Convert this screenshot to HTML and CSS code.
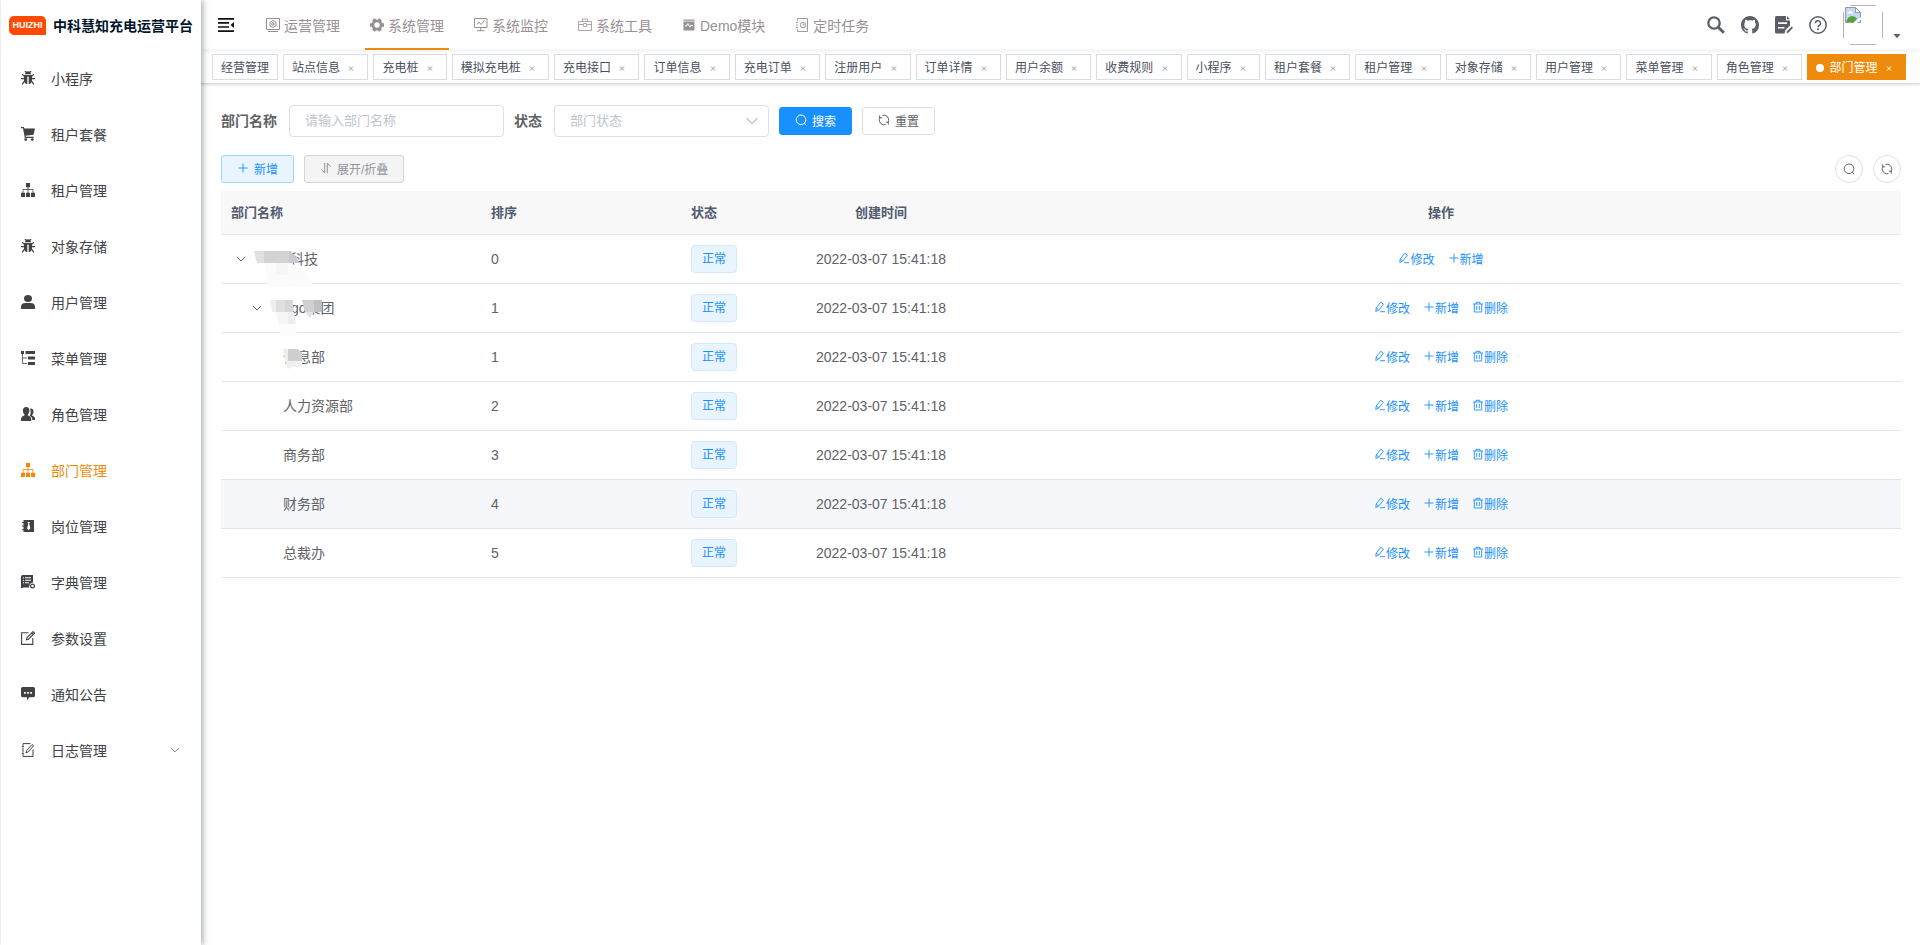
FILE: index.html
```html
<!DOCTYPE html>
<html lang="zh-CN">

<head>
    <meta charset="UTF-8">
    <meta name="viewport" content="width=device-width, initial-scale=1.0">
    <title>部门管理 - 中科慧知充电运营平台</title>
    <link rel="stylesheet" href="styles.css">
</head>

<body>
    <!-- icon sprite -->
    <svg class="sprite" aria-hidden="true">
        <symbol id="bug" viewBox="0 0 14 14">
            <path d="M4 3.300a3 3 0 0 1 6 0zM3 4h8v5.500q0 2.800-3.300 3.700V5.500H6.300v7.700Q3 12.300 3 9.500z" />
            <path d="M3.500 5.400 1.200 3.200M10.500 5.400l2.300-2.200M3.500 7.600H0M10.500 7.600H14M3.500 10 1.200 13.300M10.500 10l2.300 3.300M5 1.200 4 0M9 1.200 10 0" fill="none" stroke="currentColor" stroke-width="1.200" />
        </symbol>
        <symbol id="cart" viewBox="0 0 14 14">
            <path d="M0 0h2.800l.6 1.600H14l-1.500 6.200-8 .9.3 1H12.700v1.200H3.800L2 1.200H0z" />
            <circle cx="4.7" cy="12.6" r="1.4" />
            <circle cx="11.3" cy="12.6" r="1.4" />
        </symbol>
        <symbol id="tree" viewBox="0 0 14 14">
            <path d="M5 0h4v4.200H5zM0 9.800h4V14H0zM5 9.800h4V14H5zM10 9.800h4V14h-4z" />
            <path d="M7 4v6M2 10V6.500h10V10" fill="none" stroke="currentColor" stroke-width=".8" />
        </symbol>
        <symbol id="user" viewBox="0 0 14 14">
            <ellipse cx="7" cy="3.5" rx="4" ry="3.5" />
            <path d="M0 14v-2.200Q0 8.200 4.500 8h5q4.500.2 4.500 3.800V14z" />
        </symbol>
        <symbol id="treetable" viewBox="0 0 14 14">
            <path d="M0 0h3v3H0zM4.500 0H14v3H4.500zM7 5.500h7v3H7zM7 11h7v3H7z" />
            <path d="M1.500 3v9.500H6M1.500 7H6" fill="none" stroke="currentColor" stroke-width=".8" />
        </symbol>
        <symbol id="peoples" viewBox="0 0 14 14">
            <path d="M5.200 0c2.200 0 3.300 1.500 3.200 3.600 0 1.700-.5 3-1.500 3.800v1.100c2.200.7 3.300 1.700 3.300 3.700V14H0v-1.800c0-2 1.200-3 3.400-3.700V7.400C2.400 6.600 1.900 5.300 1.900 3.600 1.900 1.500 3 0 5.200 0z" />
            <path d="M9 1.500c2.200-.4 3.600.8 3.500 3 0 1.600-.5 2.700-1.300 3.400v.9c1.800.7 2.800 1.500 2.800 3.200v1h-2.600c-.1-2-.9-3.200-2.700-4.200 1-1.500 1.500-4.800.3-7.300z" />
        </symbol>
        <symbol id="post" viewBox="0 0 14 14">
            <path fill-rule="evenodd" d="M2.500 1H13v12H2.500v-1.800H1v-1h1.500V7.500H1v-1h1.500V4H1V3h1.500zM6.500 3l.8 1.600L6 9.500 7.700 11l1.700-1.500-1.200-4.900L9 3z" />
        </symbol>
        <symbol id="dict" viewBox="0 0 14 14">
            <path fill-rule="evenodd" d="M1.500 0H12v7.600q-4.200.4-3.800 4.900H2V13H0V1.500Q0 0 1.500 0zM2 2.300v1h1v-1zM4 2.300v1h6v-1zM2 4.800v1h1v-1zM4 4.800v1h6v-1zM2 7.300v1h1v-1zM4 7.300v1h4v-1z" />
            <circle cx="11.5" cy="11" r="1.9" fill="none" stroke="currentColor" stroke-width="1.2" />
        </symbol>
        <symbol id="edit" viewBox="0 0 14 14">
            <path d="M7.500 1.800H.6v11.600h11.200V7M5.500 8.800l.5-2.300L12 .6l1.500 1.500L7.500 8.200zM10.500 2l1.500 1.500" fill="none" stroke="currentColor" stroke-width="1.1" />
        </symbol>
        <symbol id="message" viewBox="0 0 14 14">
            <path fill-rule="evenodd" d="M1.500 0h11Q14 0 14 1.500v7q0 1.800-1.500 1.800H8.200L6 13.500v-3.200H1.500Q0 10.300 0 8.500v-7Q0 0 1.500 0zM3 5v1.800h1.800V5zM6.100 5v1.800h1.800V5zM9.200 5v1.800H11V5z" />
        </symbol>
        <symbol id="log" viewBox="0 0 14 14">
            <path d="M9.500.6H2v2.200M2 4.500v1.700M2 8v1.700M2 11.200v2.200h10V6.500M.8 3.500h2M.8 7h2M.8 10.500h2M5 9.800l.6-2.300L11 1.600l1.600 1.200L7.200 8.900z" fill="none" stroke="currentColor" />
        </symbol>
        <symbol id="operate" viewBox="0 0 14 14">
            <path d="M.5.5h13v11H.5zM2 13.500h10M7 2.500l3 1.700v3.600L7 9.500 4 7.800V4.200z" fill="none" stroke="currentColor" />
            <circle cx="7" cy="6" r="1.3" fill="none" stroke="currentColor" />
        </symbol>
        <symbol id="gear" viewBox="0 0 14 14">
            <circle cx="7" cy="7" r="4.1" fill="none" stroke="currentColor" stroke-width="2.800" />
            <path d="M11.300 7H14M0 7h2.700M9.200 3.100l1.200-2M4.800 3.100l-1.200-2M9.200 10.900l1.200 2M4.800 10.900l-1.200 2" stroke="currentColor" stroke-width="3.400" />
        </symbol>
        <symbol id="monitor" viewBox="0 0 14 14">
            <path d="M.5.5h12.500v9H.5zM6.700 9.500v3M3 12.700h7.500M3 6.500l2-2.500 2 2.500 3.500-4" fill="none" stroke="currentColor" />
        </symbol>
        <symbol id="tool" viewBox="0 0 14 14">
            <path d="M.5 3.500h13v9H.5zM4.500 3.500V1h5v2.500M.5 6.500H5M9 6.500h4.500M5.500 5.500h3v3h-3z" fill="none" stroke="currentColor" stroke-width=".8" />
        </symbol>
        <symbol id="demo" viewBox="0 0 14 14">
            <path fill-rule="evenodd" d="M1.500 1.500h11v1.300h-11zM1.500 3.400h11V12.500h-11zM3 8.500h1.600l1.400-2 1.800 3L9.500 8H11V7H9L7.900 8 6 4.900 4 7.500H3z" />
        </symbol>
        <symbol id="job" viewBox="0 0 14 14">
            <path d="M2.500 3V.5h10v13h-10V11M1 4.500h2M1 7h2M1 9.500h2M8.200 5.300V7h1.300" fill="none" stroke="currentColor" stroke-width=".9" />
            <circle cx="8" cy="7" r="2.8" fill="none" stroke="currentColor" stroke-width=".9" />
        </symbol>
        <symbol id="fold" viewBox="0 0 16 14">
            <path d="M0 0h16v1.700H0zM0 4.100h11v1.600H0zM0 8.200h11v1.600H0zM0 12.300h16V14H0zM16 4v6l-3.500-3z" />
        </symbol>
        <symbol id="big-search" viewBox="0 0 18 18">
            <circle cx="7" cy="7" r="5.7" fill="none" stroke="currentColor" stroke-width="2.3" />
            <path d="m11.300 11.300 5.500 5.500" stroke="currentColor" stroke-width="2.8" />
        </symbol>
        <symbol id="github" viewBox="0 0 16 16">
            <path d="M8 0C3.580 0 0 3.580 0 8c0 3.540 2.290 6.530 5.470 7.590.4.070.55-.17.55-.38 0-.19-.01-.82-.01-1.490-2.010.37-2.530-.49-2.690-.94-.09-.23-.48-.94-.82-1.130-.28-.15-.68-.52-.01-.53.63-.01 1.080.58 1.230.82.72 1.210 1.870.87 2.330.66.07-.52.28-.87.51-1.070-1.780-.2-3.640-.89-3.640-3.950 0-.87.31-1.590.82-2.150-.08-.2-.36-1.020.08-2.120 0 0 .67-.21 2.200.82.64-.18 1.320-.27 2-.27.68 0 1.360.09 2 .27 1.530-1.040 2.200-.82 2.200-.82.44 1.100.16 1.920.08 2.120.51.56.82 1.270.82 2.150 0 3.070-1.870 3.750-3.650 3.950.29.25.54.73.54 1.480 0 1.070-.01 1.930-.01 2.200 0 .21.15.46.55.38A8.012 8.012 0 0 0 16 8c0-4.420-3.580-8-8-8z" />
        </symbol>
        <symbol id="doc" viewBox="0 0 18 18">
            <path fill-rule="evenodd" d="M1.500 0H11v4.500h4v5l-4.500 4.500-1 3.500h-8Q0 17.500 0 16V1.500Q0 0 1.500 0zM3 6.300v1.600h9V6.300zM3 11v1.600h6.500V11zM12 0l3 3.300h-3z" />
            <path d="m11.500 17.500.5-2.200 4.800-4.800 1.200 1.300-4.500 4.700z" />
        </symbol>
        <symbol id="question" viewBox="0 0 18 18">
            <circle cx="9" cy="9" r="8.2" fill="none" stroke="currentColor" stroke-width="1.5" />
            <path d="M6.500 7.200a2.500 2.500 0 1 1 3.700 2.200Q9 10 9 11.200" fill="none" stroke="currentColor" stroke-width="1.5" />
            <circle cx="9" cy="13.3" r="1" />
        </symbol>
        <symbol id="caret" viewBox="0 0 12 12">
            <path d="M2.500 4h7L6 8.200z" />
        </symbol>
        <symbol id="close" viewBox="0 0 16 16">
            <path d="m6 6.500 4 4m0-4-4 4" fill="none" stroke="currentColor" />
        </symbol>
        <symbol id="chevron" viewBox="0 0 12 12">
            <path d="m2 4 4 4 4-4" fill="none" stroke="currentColor" />
        </symbol>
        <symbol id="search" viewBox="0 0 12 12">
            <circle cx="6" cy="5.8" r="4.8" fill="none" stroke="currentColor" />
            <path d="m9.200 9.200 2 2" fill="none" stroke="currentColor" />
        </symbol>
        <symbol id="refresh" viewBox="0 0 12 12">
            <path d="M1.500 7.500A4.700 4.700 0 0 1 1.900 3.600M4.500 1.500A4.700 4.700 0 0 1 10.500 4.500M10.500 4.500A4.700 4.700 0 0 1 10.100 8.400M7.500 10.500A4.700 4.700 0 0 1 1.500 7.500M1.700 1.300v2.500h2.500M10.300 10.700V8.200H7.800" fill="none" stroke="currentColor" />
        </symbol>
        <symbol id="plus" viewBox="0 0 12 12">
            <path d="M6 1.500v9M1.500 6h9" fill="none" stroke="currentColor" stroke-width=".9" />
        </symbol>
        <symbol id="sort" viewBox="0 0 12 12">
            <path d="M4.700 1v10L1.500 7.500M7.300 11V1l3.200 3.500" fill="none" stroke="currentColor" />
        </symbol>
        <symbol id="pen" viewBox="0 0 12 12">
            <path d="M1.800 10.500 2.200 7 6.800 1.200 9.400 3.200 4.800 9zM2.200 7l2.600 2M6 10.700h5" fill="none" stroke="currentColor" stroke-width=".9" />
        </symbol>
        <symbol id="trash" viewBox="0 0 12 12">
            <path d="M1 3h10M4 3V1.300h4V3M2.300 3v8h7.400V3M4.700 5v4M7.300 5v4" fill="none" stroke="currentColor" stroke-width=".9" />
        </symbol>
    </svg>

    <aside class="sidebar">
        <a class="logo" href="#">
            <span class="logo-mark">HUIZHI</span>
            <span class="logo-title">中科慧知充电运营平台</span>
        </a>
        <nav class="menu">
            <a href="#"><svg><use href="#bug" /></svg><span>小程序</span></a>
            <a href="#"><svg><use href="#cart" /></svg><span>租户套餐</span></a>
            <a href="#"><svg><use href="#tree" /></svg><span>租户管理</span></a>
            <a href="#"><svg><use href="#bug" /></svg><span>对象存储</span></a>
            <a href="#"><svg><use href="#user" /></svg><span>用户管理</span></a>
            <a href="#"><svg><use href="#treetable" /></svg><span>菜单管理</span></a>
            <a href="#"><svg><use href="#peoples" /></svg><span>角色管理</span></a>
            <a href="#" class="active"><svg><use href="#tree" /></svg><span>部门管理</span></a>
            <a href="#"><svg><use href="#post" /></svg><span>岗位管理</span></a>
            <a href="#"><svg><use href="#dict" /></svg><span>字典管理</span></a>
            <a href="#"><svg><use href="#edit" /></svg><span>参数设置</span></a>
            <a href="#"><svg><use href="#message" /></svg><span>通知公告</span></a>
            <a href="#"><svg><use href="#log" /></svg><span>日志管理</span><svg class="arrow"><use href="#chevron" /></svg></a>
        </nav>
    </aside>

    <div class="main-container">
        <header class="navbar">
            <button class="hamburger" type="button" aria-label="收起菜单"><svg><use href="#fold" /></svg></button>
            <nav class="topmenu">
                <a href="#"><svg><use href="#operate" /></svg>运营管理</a>
                <a href="#" class="active"><svg><use href="#gear" /></svg>系统管理</a>
                <a href="#"><svg><use href="#monitor" /></svg>系统监控</a>
                <a href="#"><svg><use href="#tool" /></svg>系统工具</a>
                <a href="#"><svg><use href="#demo" /></svg>Demo模块</a>
                <a href="#"><svg><use href="#job" /></svg>定时任务</a>
            </nav>
            <div class="right-menu">
                <button type="button" aria-label="搜索菜单"><svg><use href="#big-search" /></svg></button>
                <a href="#" aria-label="源码地址"><svg><use href="#github" /></svg></a>
                <a href="#" aria-label="文档地址"><svg><use href="#doc" /></svg></a>
                <a href="#" aria-label="帮助"><svg><use href="#question" /></svg></a>
                <button class="avatar" type="button" aria-label="个人中心">
                    <svg class="avatar-img" viewBox="0 0 40 40">
                        <path d="M7 .5h26M7 39.500h26M.5 7v26M39.500 7v26" stroke="#b4b4b4" />
                        <path d="M2.500 2.500h10l5 5v10h-15z" fill="#c3d7f7" stroke="#9a9a9a" />
                        <path d="M12.500 2.500v5h5z" fill="#fff" stroke="#9a9a9a" />
                        <path d="M4 8.500q0-1.500 1.500-1.500 1-2 2.500-.5 2 0 2 2z" fill="#fff" />
                        <path d="M3 17q2-6 6-6 4 .5 5 3l-3 3z" fill="#54a33c" />
                        <path d="m10.500 18 7.500-6v2.500L14 18z" fill="#fff" />
                    </svg>
                    <svg class="avatar-caret"><use href="#caret" /></svg>
                </button>
            </div>
        </header>

        <div class="tags-view">
            <div class="tag-item"><a href="#">经营管理</a></div>
            <div class="tag-item"><a href="#">站点信息</a> <button type="button" aria-label="关闭"><svg><use href="#close" /></svg></button></div>
            <div class="tag-item"><a href="#">充电桩</a> <button type="button" aria-label="关闭"><svg><use href="#close" /></svg></button></div>
            <div class="tag-item"><a href="#">模拟充电桩</a> <button type="button" aria-label="关闭"><svg><use href="#close" /></svg></button></div>
            <div class="tag-item"><a href="#">充电接口</a> <button type="button" aria-label="关闭"><svg><use href="#close" /></svg></button></div>
            <div class="tag-item"><a href="#">订单信息</a> <button type="button" aria-label="关闭"><svg><use href="#close" /></svg></button></div>
            <div class="tag-item"><a href="#">充电订单</a> <button type="button" aria-label="关闭"><svg><use href="#close" /></svg></button></div>
            <div class="tag-item"><a href="#">注册用户</a> <button type="button" aria-label="关闭"><svg><use href="#close" /></svg></button></div>
            <div class="tag-item"><a href="#">订单详情</a> <button type="button" aria-label="关闭"><svg><use href="#close" /></svg></button></div>
            <div class="tag-item"><a href="#">用户余额</a> <button type="button" aria-label="关闭"><svg><use href="#close" /></svg></button></div>
            <div class="tag-item"><a href="#">收费规则</a> <button type="button" aria-label="关闭"><svg><use href="#close" /></svg></button></div>
            <div class="tag-item"><a href="#">小程序</a> <button type="button" aria-label="关闭"><svg><use href="#close" /></svg></button></div>
            <div class="tag-item"><a href="#">租户套餐</a> <button type="button" aria-label="关闭"><svg><use href="#close" /></svg></button></div>
            <div class="tag-item"><a href="#">租户管理</a> <button type="button" aria-label="关闭"><svg><use href="#close" /></svg></button></div>
            <div class="tag-item"><a href="#">对象存储</a> <button type="button" aria-label="关闭"><svg><use href="#close" /></svg></button></div>
            <div class="tag-item"><a href="#">用户管理</a> <button type="button" aria-label="关闭"><svg><use href="#close" /></svg></button></div>
            <div class="tag-item"><a href="#">菜单管理</a> <button type="button" aria-label="关闭"><svg><use href="#close" /></svg></button></div>
            <div class="tag-item"><a href="#">角色管理</a> <button type="button" aria-label="关闭"><svg><use href="#close" /></svg></button></div>
            <div class="tag-item active"><span class="dot"></span> <a href="#">部门管理</a> <button type="button" aria-label="关闭"><svg><use href="#close" /></svg></button></div>
        </div>

        <main class="app-main">
            <form class="query-form">
                <div class="form-item">
                    <label for="dept-name">部门名称</label>
                    <input type="text" id="dept-name" placeholder="请输入部门名称">
                </div>
                <div class="form-item">
                    <label for="dept-status">状态</label>
                    <div class="select">
                        <select id="dept-status">
                            <option value="">部门状态</option>
                            <option value="0">正常</option>
                            <option value="1">停用</option>
                        </select>
                        <svg><use href="#chevron" /></svg>
                    </div>
                </div>
                <button class="btn btn-primary" type="button"><svg><use href="#search" /></svg>搜索</button>
                <button class="btn" type="reset"><svg><use href="#refresh" /></svg>重置</button>
            </form>

            <div class="toolbar">
                <button class="btn btn-add" type="button"><svg><use href="#plus" /></svg>新增</button>
                <button class="btn btn-expand" type="button"><svg><use href="#sort" /></svg>展开/折叠</button>
                <div class="right-tools">
                    <button class="btn btn-circle" type="button" aria-label="隐藏搜索"><svg><use href="#search" /></svg></button>
                    <button class="btn btn-circle" type="button" aria-label="刷新"><svg><use href="#refresh" /></svg></button>
                </div>
            </div>

            <table class="dept-table">
                <colgroup>
                    <col class="col-name">
                    <col class="col-sort">
                    <col class="col-status">
                    <col class="col-time">
                    <col>
                </colgroup>
                <thead>
                    <tr>
                        <th>部门名称</th>
                        <th>排序</th>
                        <th>状态</th>
                        <th class="center">创建时间</th>
                        <th class="center">操作</th>
                    </tr>
                </thead>
                <tbody>
                    <tr>
                        <td>
                            <div class="tree-node">
                                <svg class="expand"><use href="#chevron" /></svg>
                                <span class="masked root">科技<svg class="mask" viewBox="0 0 64 38">
                                    <path d="M10 12h26l14 6 10 18H38l-2-3v3H14z" fill="#fbfbfb" />
                                    <path d="M0 0h10v12H3z" fill="#e1e0df" />
                                    <path d="M10 0h25v12H10z" fill="#d3d3d5" />
                                    <path d="M35 0h2l6 7 2 5H35z" fill="#c9cace" />
                                    <path d="M22 12h12v12H22z" fill="#f6f6f7" />
                                </svg></span>
                            </div>
                        </td>
                        <td>0</td>
                        <td><span class="status">正常</span></td>
                        <td class="center">2022-03-07 15:41:18</td>
                        <td>
                            <div class="actions">
                                <a href="#"><svg><use href="#pen" /></svg>修改</a>
                                <a href="#"><svg><use href="#plus" /></svg>新增</a>
                            </div>
                        </td>
                    </tr>
                    <tr>
                        <td>
                            <div class="tree-node level-1">
                                <svg class="expand"><use href="#chevron" /></svg>
                                <span class="masked group">go集团<svg class="mask" viewBox="0 0 64 38">
                                    <path d="M0 0h6v12H2z" fill="#eee" />
                                    <path d="M6 0h9v12H6z" fill="#e0dfdd" />
                                    <path d="M15 0h8v12h-8z" fill="#d6d6d6" />
                                    <path d="M6 12h12v12H8z" fill="#f6f6f6" />
                                    <path d="M18 12h6l2 12h-8z" fill="#eeeeef" />
                                    <path d="M9 24h17l1 12H10z" fill="#fcfcfc" />
                                    <path d="M32 0h12v12h-9z" fill="#d0d0d2" />
                                    <path d="M44 0h8v12h-8z" fill="#bfc0c4" />
                                    <path d="M35 12h9l-4 6z" fill="#e4e4e6" />
                                </svg></span>
                            </div>
                        </td>
                        <td>1</td>
                        <td><span class="status">正常</span></td>
                        <td class="center">2022-03-07 15:41:18</td>
                        <td>
                            <div class="actions">
                                <a href="#"><svg><use href="#pen" /></svg>修改</a>
                                <a href="#"><svg><use href="#plus" /></svg>新增</a>
                                <a href="#"><svg><use href="#trash" /></svg>删除</a>
                            </div>
                        </td>
                    </tr>
                    <tr>
                        <td>
                            <div class="tree-node level-2">
                                <span class="masked">信息部<svg class="mask" viewBox="0 0 64 38">
                                    <path d="M0 0h5v12H2z" fill="#eee" />
                                    <path d="M5 0h10l4 4v8H5z" fill="#d0cfd0" />
                                    <path d="M2 12h17v6H9l-4 2-1-2z" fill="#efeff0" />
                                </svg></span>
                            </div>
                        </td>
                        <td>1</td>
                        <td><span class="status">正常</span></td>
                        <td class="center">2022-03-07 15:41:18</td>
                        <td>
                            <div class="actions">
                                <a href="#"><svg><use href="#pen" /></svg>修改</a>
                                <a href="#"><svg><use href="#plus" /></svg>新增</a>
                                <a href="#"><svg><use href="#trash" /></svg>删除</a>
                            </div>
                        </td>
                    </tr>
                    <tr>
                        <td><div class="tree-node level-2">人力资源部</div></td>
                        <td>2</td>
                        <td><span class="status">正常</span></td>
                        <td class="center">2022-03-07 15:41:18</td>
                        <td>
                            <div class="actions">
                                <a href="#"><svg><use href="#pen" /></svg>修改</a>
                                <a href="#"><svg><use href="#plus" /></svg>新增</a>
                                <a href="#"><svg><use href="#trash" /></svg>删除</a>
                            </div>
                        </td>
                    </tr>
                    <tr>
                        <td><div class="tree-node level-2">商务部</div></td>
                        <td>3</td>
                        <td><span class="status">正常</span></td>
                        <td class="center">2022-03-07 15:41:18</td>
                        <td>
                            <div class="actions">
                                <a href="#"><svg><use href="#pen" /></svg>修改</a>
                                <a href="#"><svg><use href="#plus" /></svg>新增</a>
                                <a href="#"><svg><use href="#trash" /></svg>删除</a>
                            </div>
                        </td>
                    </tr>
                    <tr class="current">
                        <td><div class="tree-node level-2">财务部</div></td>
                        <td>4</td>
                        <td><span class="status">正常</span></td>
                        <td class="center">2022-03-07 15:41:18</td>
                        <td>
                            <div class="actions">
                                <a href="#"><svg><use href="#pen" /></svg>修改</a>
                                <a href="#"><svg><use href="#plus" /></svg>新增</a>
                                <a href="#"><svg><use href="#trash" /></svg>删除</a>
                            </div>
                        </td>
                    </tr>
                    <tr>
                        <td><div class="tree-node level-2">总裁办</div></td>
                        <td>5</td>
                        <td><span class="status">正常</span></td>
                        <td class="center">2022-03-07 15:41:18</td>
                        <td>
                            <div class="actions">
                                <a href="#"><svg><use href="#pen" /></svg>修改</a>
                                <a href="#"><svg><use href="#plus" /></svg>新增</a>
                                <a href="#"><svg><use href="#trash" /></svg>删除</a>
                            </div>
                        </td>
                    </tr>
                </tbody>
            </table>
        </main>
    </div>
</body>

</html>
```

FILE: styles.css
```css
* {
    box-sizing: border-box;
}

body {
    display: flex;
    min-height: 100vh;
    margin: 0;
    padding-left: 1px;
    background-color: #fff;
    color: #606266;
    font-family: "Liberation Sans", "Noto Sans CJK SC", sans-serif;
    font-size: 14px;
}

a {
    color: inherit;
    text-decoration: none;
}

button,
input,
select {
    font-family: inherit;
}

button {
    padding: 0;
    border: none;
    background: none;
    color: inherit;
    cursor: pointer;
}

svg {
    display: block;
    flex-shrink: 0;
    fill: currentColor;
}

.sprite {
    display: none;
}

/* sidebar */
.sidebar {
    z-index: 2;
    flex: 0 0 200px;
    background-color: #fff;
    box-shadow: 2px 0 6px rgba(0, 21, 41, 0.35);
}

.logo {
    display: flex;
    align-items: center;
    gap: 7px;
    height: 50px;
    padding-left: 8px;
    white-space: nowrap;
}

.logo-mark {
    width: 37px;
    border-radius: 5px 5px 0 5px;
    background-color: #ff4a00;
    color: #fff;
    font-size: 9px;
    font-weight: bold;
    line-height: 19px;
    text-align: center;
}

.logo-title {
    color: #001529;
    font-weight: bold;
}

.menu a {
    display: flex;
    align-items: center;
    gap: 16px;
    height: 56px;
    padding: 0 20px;
    color: #404245;
}

.menu svg {
    width: 14px;
    height: 14px;
}

.menu .arrow {
    width: 12px;
    height: 12px;
    margin-left: auto;
    color: #909399;
}

.menu .active {
    color: #ef8b0c;
}

/* top bar */
.main-container {
    flex: 1;
    min-width: 0;
}

.navbar {
    display: flex;
    height: 50px;
    box-shadow: 0 1px 4px rgba(0, 21, 41, 0.08);
}

.hamburger {
    padding: 0 17px;
    color: #111;
}

.hamburger svg {
    width: 16px;
    height: 14px;
}

.topmenu {
    display: flex;
    gap: 20px;
    margin-left: 10px;
    color: #999093;
}

.topmenu a {
    display: flex;
    align-items: center;
    gap: 4px;
    padding: 1px 5px 0;
    border-bottom: 2px solid transparent;
    white-space: nowrap;
}

.topmenu svg {
    width: 14px;
    height: 14px;
}

.topmenu .active {
    border-bottom-color: #ef8b0c;
}

.right-menu {
    display: flex;
    align-items: center;
    gap: 16px;
    margin-left: auto;
    padding-right: 17px;
    color: #5a5e66;
}

.right-menu svg {
    width: 18px;
    height: 18px;
}

.avatar {
    display: flex;
    align-items: flex-end;
    gap: 8px;
}

.avatar .avatar-img {
    width: 40px;
    height: 40px;
}

.avatar .avatar-caret {
    width: 12px;
    height: 12px;
    margin-bottom: 3px;
}

/* opened pages */
.tags-view {
    display: flex;
    gap: 5px;
    height: 34px;
    padding: 4px 11px 0;
    border-bottom: 1px solid #d8dce5;
    box-shadow: 0 1px 3px rgba(0, 0, 0, 0.12), 0 0 3px rgba(0, 0, 0, 0.04);
}

.tag-item {
    height: 26px;
    padding: 0 8px;
    border: 1px solid #d8dce5;
    background-color: #fff;
    color: #495060;
    font-size: 12px;
    line-height: 26px;
    white-space: nowrap;
}

.tag-item button {
    width: 16px;
    height: 16px;
    color: #9a9ea8;
    vertical-align: -4px;
}

.tag-item button svg {
    width: 16px;
    height: 16px;
}

.tag-item.active {
    border-color: #ef8b0c;
    background-color: #ef8b0c;
    color: #fff;
}

.tag-item.active button {
    color: #fff;
}

.dot {
    display: inline-block;
    width: 8px;
    height: 8px;
    margin-right: 2px;
    border-radius: 50%;
    background-color: #fff;
}

/* page */
.app-main {
    padding: 21px 19px 20px 20px;
}

.query-form {
    display: flex;
    align-items: center;
    gap: 10px;
}

.form-item {
    display: flex;
    align-items: center;
    gap: 12px;
}

.form-item label {
    padding-bottom: 2px;
    font-weight: bold;
}

.form-item input,
.form-item select {
    width: 215px;
    height: 32px;
    padding: 0 15px 2px;
    border: 1px solid #dcdfe6;
    border-radius: 4px;
    background-color: #fff;
    font-size: 13px;
}

.form-item input::placeholder {
    color: #c0c4cc;
}

.select {
    position: relative;
}

.form-item select {
    appearance: none;
    color: #c0c4cc;
}

.select svg {
    position: absolute;
    top: 8px;
    right: 9px;
    width: 16px;
    height: 16px;
    color: #c0c4cc;
    pointer-events: none;
}

.btn {
    display: flex;
    align-items: center;
    gap: 5px;
    height: 28px;
    padding: 0 15px 2px;
    border: 1px solid #dcdfe6;
    border-radius: 3px;
    background-color: #fff;
    color: #606266;
    font-size: 12px;
    white-space: nowrap;
}

.btn svg {
    width: 12px;
    height: 12px;
}

.btn-primary {
    border-color: #1890ff;
    background-color: #1890ff;
    color: #fff;
}

.btn-add {
    border-color: #a3d3ff;
    background-color: #e8f4ff;
    color: #1890ff;
}

.btn-expand {
    border-color: #d3d4d6;
    background-color: #f4f4f5;
    color: #909399;
}

.btn-circle {
    justify-content: center;
    width: 28px;
    padding: 0;
    border-radius: 50%;
}

.toolbar {
    display: flex;
    gap: 10px;
    margin: 18px 0 8px;
}

.right-tools {
    display: flex;
    gap: 10px;
    margin-left: auto;
}

/* table */
.dept-table {
    width: 100%;
    border-spacing: 0;
    table-layout: fixed;
}

.col-name {
    width: 260px;
}

.col-sort,
.col-time {
    width: 200px;
}

.col-status {
    width: 100px;
}

.dept-table th {
    height: 44px;
    padding: 0 10px 2px;
    border-bottom: 1px solid #dfe6ec;
    background-color: #f8f8f9;
    color: #515a6e;
    font-size: 13px;
    text-align: left;
}

.dept-table td {
    height: 49px;
    padding: 0 10px;
    border-bottom: 1px solid #dfe6ec;
}

.dept-table .center {
    text-align: center;
}

.dept-table .current td {
    background-color: #f5f7fa;
}

.tree-node {
    display: flex;
    align-items: center;
    line-height: 28px;
}

.level-1 {
    padding-left: 16px;
}

.level-2 {
    padding-left: 52px;
}

.expand {
    width: 12px;
    height: 12px;
    margin: 0 7px 0 4px;
}

.masked {
    position: relative;
}

.masked.root {
    padding-left: 36px;
}

.masked.group {
    padding-left: 21px;
}

.mask {
    position: absolute;
    top: 6px;
    left: 0;
    width: 64px;
    height: 38px;
}

.status {
    display: inline-block;
    padding: 0 10px;
    border: 1px solid #d1e9ff;
    border-radius: 4px;
    background-color: #e8f4ff;
    color: #1890ff;
    font-size: 12px;
    line-height: 26px;
    vertical-align: middle;
}

.actions {
    display: flex;
    justify-content: center;
    gap: 13px;
    padding-bottom: 2px;
    color: #1890ff;
    font-size: 12px;
}

.actions a {
    display: flex;
    align-items: center;
}

.actions svg {
    width: 12px;
    height: 12px;
}
```
